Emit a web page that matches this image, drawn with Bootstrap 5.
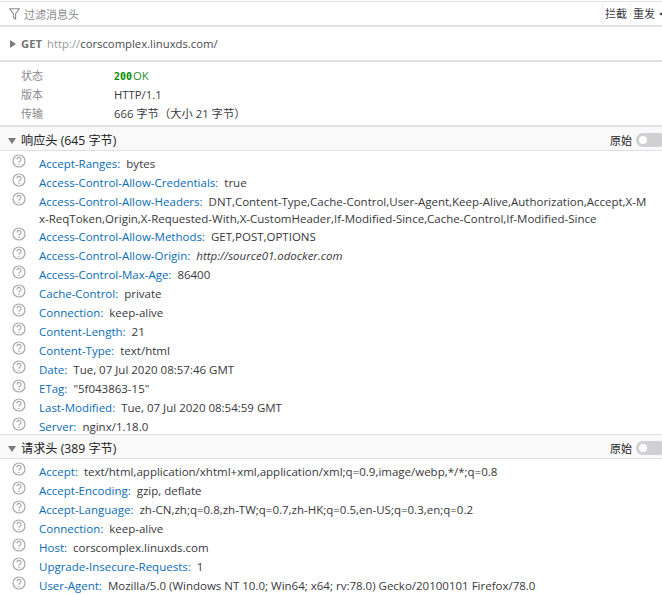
<!DOCTYPE html>
<html lang="zh">
<head>
<meta charset="utf-8">
<title>消息头</title>
<link href="https://cdn.jsdelivr.net/npm/bootstrap@5.3.0/dist/css/bootstrap.min.css" rel="stylesheet">
<style>
html,body{height:595px;overflow:hidden;background:#fff}
body{font-family:"Open Sans","Noto Sans CJK SC",sans-serif;font-size:11.5px;line-height:19px;color:#38383d}
.topline{height:2px;border-top:1px solid #e0e0e1;margin-top:1px}
.filterbar{height:24px;border-bottom:2px solid #e0e0e1;padding-left:9px;color:#8a8a8f;font-size:11px}
.tool-txt{color:#38383d}
.tool-sep{border-left:1px dotted #e4e4e4;padding:0 3px 0 2px;line-height:20px}
.tool-last{padding-right:5px}
.tri-l{width:0;height:0;border-right:6px solid #38383d;border-top:3.5px solid transparent;border-bottom:3.5px solid transparent;margin-left:-1px;margin-right:-3px}
.urlrow{height:35px;border-bottom:2px solid #e0e0e1;padding-left:10px;font-size:11.3px}
.urlrow b{color:#737373;margin:0 5px 0 0}
.urlhost{color:#9a9a9d}
.urlhost span{color:#4a4a4f}
.tri-r{width:0;height:0;border-left:6px solid #7a7a7f;border-top:4px solid transparent;border-bottom:4px solid transparent;margin-right:5px}
.summary{height:65px;padding-top:4px;border-bottom:2px solid #e0e0e1}
.sum-row{height:19px}
.sum-k{width:114px;padding-left:21px;color:#8a8a8f;font-size:11px}
.sum-v{font-size:11.3px}
.ok-code{font-family:"DejaVu Sans Mono",monospace;font-size:10px;color:#058b00;font-weight:600;margin-right:1px}
.ok-txt{color:#2f8a2f}
.sec-head{height:24px;background:#f9f9fa;border-bottom:1px solid #e0e0e1;padding:3px 0 0 8px;font-size:12.2px;color:#222}
.sec-two{height:25px;border-top:1px solid #e0e0e1}
.tri-d{width:0;height:0;border-top:6px solid #7a7a7f;border-left:4.5px solid transparent;border-right:4.5px solid transparent;margin-right:5px;margin-top:1px}
.raw-lbl{font-size:11px;margin-right:4px}
.toggle-pill{width:30px;height:14px;border-radius:7px;background:#d0d0d2;position:relative;margin-right:-4px;flex:none}
.toggle-pill::before{content:"";position:absolute;left:3px;top:3px;width:8px;height:8px;border-radius:50%;background:#fff}
.hdr-list{padding:4px 0 0;margin:0 0 -1px;list-style:none;display:flex;flex-direction:column;gap:2px}
.hdr-two{padding-top:4px}
.hdr-row{display:flex;line-height:17px;padding-left:12px;padding-right:12px}
.hdr-wrap{margin-bottom:-1px}
.qicon{flex:none;width:14px;height:14px;margin:-1px 13px 0 0;color:#a9a9ac}
.hdr-body{flex:1;min-width:0;word-break:break-all}
.hdr-k{color:#0a6db5;margin-right:3px}
.hdr-v{color:#38383d}
</style>
</head>
<body>
<div class="topline"></div>
<div class="filterbar d-flex align-items-center">
  <svg width="11" height="12" viewBox="0 0 11 12" class="me-1 flex-none"><path d="M.7.8h9.6L6.6 5.6v5.4L4.4 9.4V5.6z" fill="none" stroke="#8a8a8f" stroke-width="1.1"/></svg>
  <span>过滤消息头</span>
  <div class="ms-auto d-flex align-items-center tool-txt text-nowrap">
    <span class="tool-sep">拦截</span><span class="tool-sep tool-last">重发</span><span class="tri-l"></span>
  </div>
</div>
<div class="urlrow d-flex align-items-center">
  <span class="tri-r"></span><b>GET</b><span class="urlhost">http://<span>corscomplex.linuxds.com/</span></span>
</div>
<div class="summary">
  <div class="sum-row d-flex"><span class="sum-k">状态</span><span class="sum-v"><span class="ok-code">200</span><span class="ok-txt">OK</span></span></div>
  <div class="sum-row d-flex"><span class="sum-k">版本</span><span class="sum-v">HTTP/1.1</span></div>
  <div class="sum-row d-flex"><span class="sum-k">传输</span><span class="sum-v">666 字节（大小 21 字节）</span></div>
</div>
<div class="sec-head d-flex align-items-center">
  <span class="tri-d"></span><span>响应头 (645 字节)</span>
  <span class="ms-auto raw-lbl">原始</span><span class="toggle-pill"></span>
</div>
<ul class="hdr-list">
  <li class="hdr-row"><svg class="qicon"><use href="#q"/></svg><div class="hdr-body"><span class="hdr-k">Accept-Ranges:</span> <span class="hdr-v">bytes</span></div></li>
  <li class="hdr-row"><svg class="qicon"><use href="#q"/></svg><div class="hdr-body"><span class="hdr-k">Access-Control-Allow-Credentials:</span> <span class="hdr-v">true</span></div></li>
  <li class="hdr-row hdr-wrap"><svg class="qicon"><use href="#q"/></svg><div class="hdr-body"><span class="hdr-k">Access-Control-Allow-Headers:</span> <span class="hdr-v">DNT,Content-Type,Cache-Control,User-Agent,Keep-Alive,Authorization,Accept,X-Mx-ReqToken,Origin,X-Requested-With,X-CustomHeader,If-Modified-Since,Cache-Control,If-Modified-Since</span></div></li>
  <li class="hdr-row"><svg class="qicon"><use href="#q"/></svg><div class="hdr-body"><span class="hdr-k">Access-Control-Allow-Methods:</span> <span class="hdr-v">GET,POST,OPTIONS</span></div></li>
  <li class="hdr-row"><svg class="qicon"><use href="#q"/></svg><div class="hdr-body"><span class="hdr-k">Access-Control-Allow-Origin:</span> <span class="hdr-v fst-italic">http://source01.odocker.com</span></div></li>
  <li class="hdr-row"><svg class="qicon"><use href="#q"/></svg><div class="hdr-body"><span class="hdr-k">Access-Control-Max-Age:</span> <span class="hdr-v">86400</span></div></li>
  <li class="hdr-row"><svg class="qicon"><use href="#q"/></svg><div class="hdr-body"><span class="hdr-k">Cache-Control:</span> <span class="hdr-v">private</span></div></li>
  <li class="hdr-row"><svg class="qicon"><use href="#q"/></svg><div class="hdr-body"><span class="hdr-k">Connection:</span> <span class="hdr-v">keep-alive</span></div></li>
  <li class="hdr-row"><svg class="qicon"><use href="#q"/></svg><div class="hdr-body"><span class="hdr-k">Content-Length:</span> <span class="hdr-v">21</span></div></li>
  <li class="hdr-row"><svg class="qicon"><use href="#q"/></svg><div class="hdr-body"><span class="hdr-k">Content-Type:</span> <span class="hdr-v">text/html</span></div></li>
  <li class="hdr-row"><svg class="qicon"><use href="#q"/></svg><div class="hdr-body"><span class="hdr-k">Date:</span> <span class="hdr-v">Tue, 07 Jul 2020 08:57:46 GMT</span></div></li>
  <li class="hdr-row"><svg class="qicon"><use href="#q"/></svg><div class="hdr-body"><span class="hdr-k">ETag:</span> <span class="hdr-v">"5f043863-15"</span></div></li>
  <li class="hdr-row"><svg class="qicon"><use href="#q"/></svg><div class="hdr-body"><span class="hdr-k">Last-Modified:</span> <span class="hdr-v">Tue, 07 Jul 2020 08:54:59 GMT</span></div></li>
  <li class="hdr-row"><svg class="qicon"><use href="#q"/></svg><div class="hdr-body"><span class="hdr-k">Server:</span> <span class="hdr-v">nginx/1.18.0</span></div></li>
</ul>
<div class="sec-head sec-two d-flex align-items-center">
  <span class="tri-d"></span><span>请求头 (389 字节)</span>
  <span class="ms-auto raw-lbl">原始</span><span class="toggle-pill"></span>
</div>
<ul class="hdr-list hdr-two">
  <li class="hdr-row"><svg class="qicon"><use href="#q"/></svg><div class="hdr-body"><span class="hdr-k">Accept:</span> <span class="hdr-v">text/html,application/xhtml+xml,application/xml;q=0.9,image/webp,*/*;q=0.8</span></div></li>
  <li class="hdr-row"><svg class="qicon"><use href="#q"/></svg><div class="hdr-body"><span class="hdr-k">Accept-Encoding:</span> <span class="hdr-v">gzip, deflate</span></div></li>
  <li class="hdr-row"><svg class="qicon"><use href="#q"/></svg><div class="hdr-body"><span class="hdr-k">Accept-Language:</span> <span class="hdr-v">zh-CN,zh;q=0.8,zh-TW;q=0.7,zh-HK;q=0.5,en-US;q=0.3,en;q=0.2</span></div></li>
  <li class="hdr-row"><svg class="qicon"><use href="#q"/></svg><div class="hdr-body"><span class="hdr-k">Connection:</span> <span class="hdr-v">keep-alive</span></div></li>
  <li class="hdr-row"><svg class="qicon"><use href="#q"/></svg><div class="hdr-body"><span class="hdr-k">Host:</span> <span class="hdr-v">corscomplex.linuxds.com</span></div></li>
  <li class="hdr-row"><svg class="qicon"><use href="#q"/></svg><div class="hdr-body"><span class="hdr-k">Upgrade-Insecure-Requests:</span> <span class="hdr-v">1</span></div></li>
  <li class="hdr-row"><svg class="qicon"><use href="#q"/></svg><div class="hdr-body"><span class="hdr-k">User-Agent:</span> <span class="hdr-v">Mozilla/5.0 (Windows NT 10.0; Win64; x64; rv:78.0) Gecko/20100101 Firefox/78.0</span></div></li>
</ul>
<svg width="0" height="0" class="position-absolute"><defs><symbol id="q" viewBox="0 0 14 14"><circle cx="7" cy="7" r="6" fill="none" stroke="currentColor" stroke-width="1.2"/><path d="M5 5.4a2 2 0 1 1 3 1.7c-.7.4-1 .8-1 1.6" fill="none" stroke="currentColor" stroke-width="1.2"/><circle cx="7" cy="10.5" r=".8" fill="currentColor"/></symbol></defs></svg>
</body>
</html>
